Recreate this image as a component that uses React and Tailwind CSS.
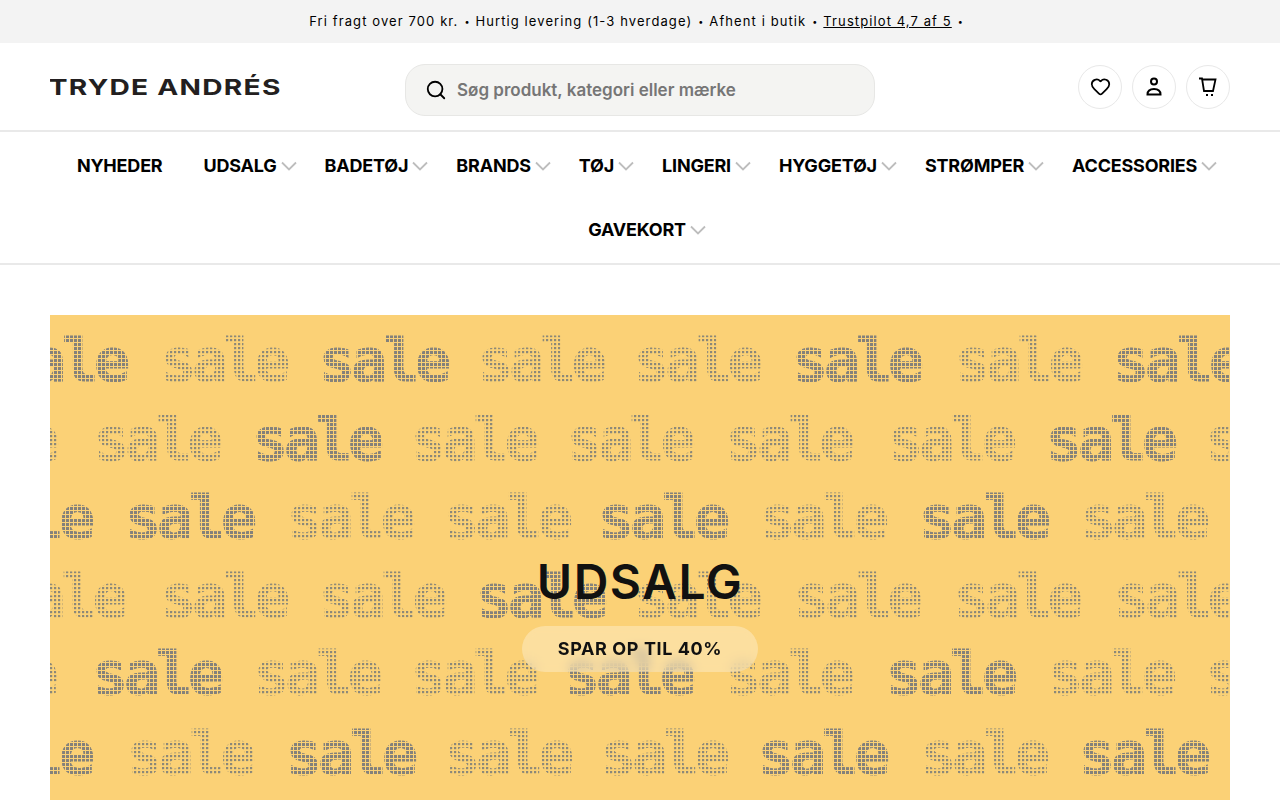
import React from 'react';
import { Heart, Search } from 'lucide-react';

const navItems = ['UDSALG', 'BADETØJ', 'BRANDS', 'TØJ', 'LINGERI', 'HYGGETØJ', 'STRØMPER', 'ACCESSORIES', 'GAVEKORT'];

// [x, bold] per word, one list per row of the sale wallpaper
const saleRows = [
  { y: 66, words: [[-52, 1], [111, 0], [269, 1], [428, 0], [584, 0], [742, 1], [905, 0], [1063, 1]] },
  { y: 145, words: [[-119, 0], [44, 0], [202, 1], [361, 0], [517, 0], [676, 0], [838, 0], [996, 1], [1156, 0]] },
  { y: 223, words: [[-87, 1], [75, 1], [237, 0], [394, 0], [548, 1], [710, 0], [869, 1], [1031, 0]] },
  { y: 302, words: [[-51, 0], [111, 0], [269, 0], [426, 1], [584, 0], [744, 0], [904, 0], [1064, 0]] },
  { y: 379, words: [[-120, 0], [42, 1], [204, 0], [361, 0], [514, 1], [676, 0], [836, 1], [998, 0], [1156, 0]] },
  { y: 459, words: [[-87, 1], [77, 0], [236, 1], [395, 0], [551, 0], [708, 1], [871, 0], [1029, 1]] },
];

function SaleWallpaper() {
  return (
    <svg className="absolute inset-0 h-full w-full" aria-hidden="true">
      <defs>
        <pattern id="dotsBold" width="4" height="4" patternUnits="userSpaceOnUse">
          <rect width="3" height="3" fill="#84817a" />
        </pattern>
        <pattern id="dotsLight" width="4" height="4" patternUnits="userSpaceOnUse">
          <rect width="2.2" height="2.2" fill="#8c8878" />
        </pattern>
        <filter id="soften">
          <feGaussianBlur stdDeviation="0.5" />
        </filter>
      </defs>
      <g filter="url(#soften)">
        {saleRows.map((row) =>
          row.words.map(([x, bold]) => {
            const fill = bold ? 'url(#dotsBold)' : 'url(#dotsLight)';
            return (
              <text
                key={`${row.y}-${x}`}
                x={x}
                y={row.y}
                textLength={bold ? 128 : 125}
                lengthAdjust="spacingAndGlyphs"
                letterSpacing="-4"
                fontFamily="'DejaVu Sans Mono', monospace"
                fontWeight="700"
                fontSize="58"
                fill={fill}
                stroke={fill}
                strokeWidth="0.8"
              >
                sale
              </text>
            );
          }),
        )}
      </g>
    </svg>
  );
}

function UserIcon() {
  return (
    <svg width="20" height="20" viewBox="0 0 20 20" fill="none" stroke="#000" strokeWidth="2">
      <circle cx="10" cy="4.5" r="3" />
      <path d="M3.5 17.5c0-3.6 2.8-5.500 6.500-5.500s6.500 1.900 6.500 5.500z" />
    </svg>
  );
}

function CartIcon() {
  return (
    <svg width="20" height="20" viewBox="0 0 20 20" fill="none" stroke="#000" strokeWidth="1.8">
      <path d="M1 1.500h3L6 14h9l2.500-11.500H4.300" />
      <path d="M8 18h2M13 18h2" strokeWidth="2" />
    </svg>
  );
}

function NavChevron() {
  return (
    <svg width="16" height="10" viewBox="0 0 16 10" fill="none" stroke="#bdbdbd" strokeWidth="1.8" className="mt-[1px] shrink-0">
      <path d="M1 1.500l7 7 7-7" />
    </svg>
  );
}

function IconButton({ children }) {
  return (
    <button className="flex h-[44px] w-[44px] items-center justify-center rounded-full border border-[#e8e8e8] bg-white">
      {children}
    </button>
  );
}

function Dot() {
  return <span className="w-[17px] text-center text-[9px] tracking-normal">•</span>;
}

export default function App() {
  return (
    <div className="h-[800px] overflow-hidden bg-white font-['Inter',sans-serif] text-black">
      <div className="flex h-[43px] items-center justify-center bg-[#f3f3f3] pr-[2px] text-[13px] tracking-[1.1px] text-black">
        <span>Fri fragt over 700 kr.</span>
        <Dot />
        <span>Hurtig levering (1-3 hverdage)</span>
        <Dot />
        <span>Afhent i butik</span>
        <Dot />
        <span className="underline">Trustpilot 4,7 af 5</span>
        <Dot />
      </div>

      <header className="relative flex h-[87px] items-center justify-between px-[50px]">
        <svg width="232" height="30" className="mb-[3px]" role="img" aria-label="Tryde Andrés">
          <text
            x="-1"
            y="25"
            transform="scale(1.28 1)"
            textLength="181"
            lengthAdjust="spacing"
            fontFamily="Inter, sans-serif"
            fontWeight="700"
            fontSize="22"
            fill="#231f20"
          >
            TRYDE ANDRÉS
          </text>
        </svg>
        <div className="absolute left-[405px] top-[21px] flex h-[52px] w-[470px] items-center gap-[10px] rounded-[20px] border border-[#e7e7e5] bg-[#f4f4f2] pl-[19px]">
          <Search size={22} strokeWidth={2} className="shrink-0" />
          <span className="pt-[2px] text-[17px] font-semibold text-[#767676]">Søg produkt, kategori eller mærke</span>
        </div>
        <div className="flex gap-[10px]">
          <IconButton><Heart size={21} strokeWidth={2} /></IconButton>
          <IconButton><UserIcon /></IconButton>
          <IconButton><CartIcon /></IconButton>
        </div>
      </header>

      <nav className="flex flex-wrap justify-center border-y-2 border-[#e9e9e9] px-[50px] pb-[2px] pt-[1px]">
        <a className="flex h-[64px] items-center pl-[21px] pr-[20px] text-[18px] font-bold tracking-[-0.2px]">NYHEDER</a>
        {navItems.map((item) => (
          <a key={item} className="flex h-[64px] items-center gap-[4px] pl-[21px] pr-[7px] text-[18px] font-bold tracking-[-0.2px]">
            {item}
            <NavChevron />
          </a>
        ))}
      </nav>

      <section className="relative mx-[50px] mt-[50px] h-[560px] overflow-hidden bg-[#fbd176]">
        <SaleWallpaper />
        <div className="relative flex flex-col items-center pt-[236px]">
          <h1 className="text-[48px] font-semibold leading-[62px] tracking-[1.5px] text-[#111]">UDSALG</h1>
          <div className="mt-[13px] flex h-[46px] w-[236px] items-center justify-center rounded-[23px] bg-white/30 pb-[1px] text-[18px] font-bold tracking-[0.6px] text-[#111] backdrop-blur-[6px]">
            SPAR OP TIL 40%
          </div>
        </div>
      </section>
    </div>
  );
}
